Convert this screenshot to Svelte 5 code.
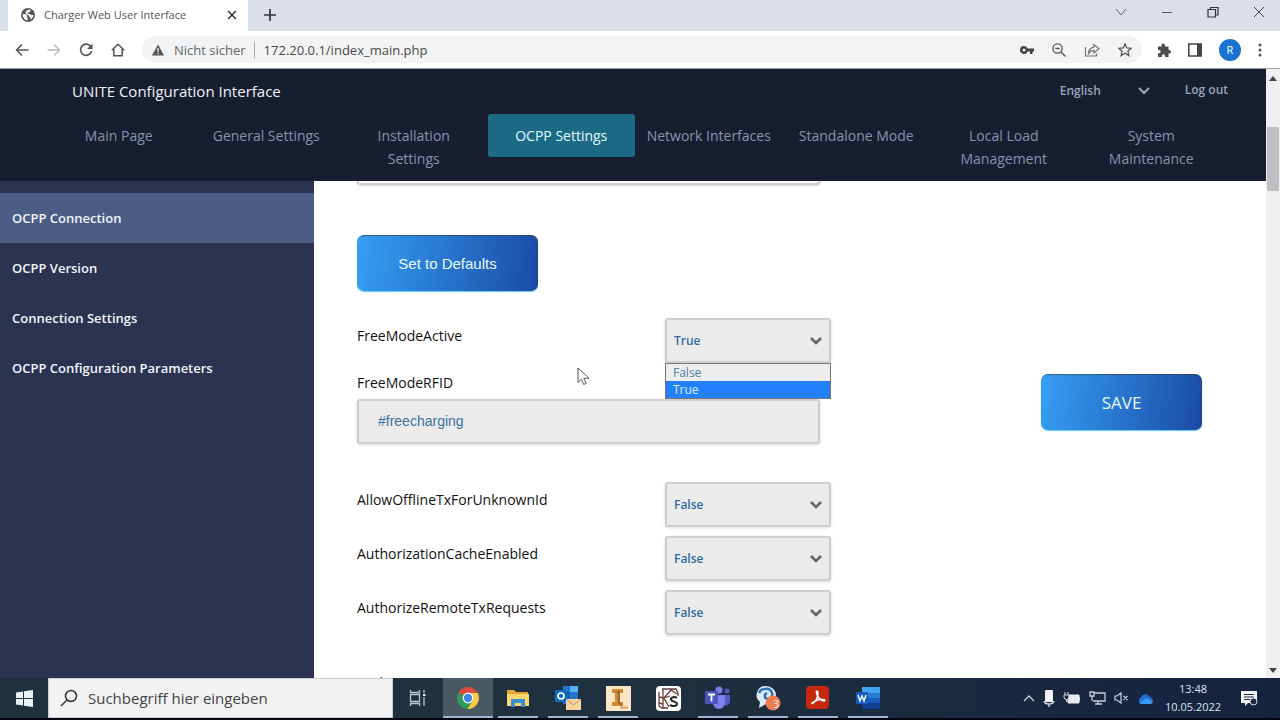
<script>
  // Page data
  const menu = [
    "Main Page",
    "General Settings",
    "Installation Settings",
    "OCPP Settings",
    "Network Interfaces",
    "Standalone Mode",
    "Local Load Management",
    "System Maintenance",
  ];
  const sections = [
    "OCPP Connection",
    "OCPP Version",
    "Connection Settings",
    "OCPP Configuration Parameters",
  ];

  // UI state
  let activeMenu = "OCPP Settings";
  let activeSection = "OCPP Connection";
  let language = "English";
  let url = "172.20.0.1/index_main.php";
  let chargePoint = "";
  let search = "";
  let freeMode = "True";
  let listOpen = true;
  let rfid = "#freecharging";
  let params = [
    { name: "AllowOfflineTxForUnknownId", value: "False" },
    { name: "AuthorizationCacheEnabled", value: "False" },
    { name: "AuthorizeRemoteTxRequests", value: "False" },
  ];

  function pick(option) {
    freeMode = option;
    listOpen = false;
  }

  function setDefaults() {
    freeMode = "False";
    rfid = "";
    params = params.map((p) => ({ ...p, value: "False" }));
  }
</script>

<div class="screen">
  <!-- Tab strip -->
  <div class="tabstrip">
    <div class="tab">
      <svg width="14" height="14" viewBox="0 0 14 14">
        <circle cx="7" cy="7" r="7" fill="#54585c" />
        <path d="M1.500 6l3 .3 1.800 1.400-.4 1.500 1 1.300-.6 2C3.500 12 1.600 9.500 1.500 6zM8 1.600l1.600.5-.5 1.700-2.100.7-.5 1.300 2.300.2 1.400 1.200 2.400-.1c0 1.500-1.200 3.500-2.900 4.300l-.3-1.900-1.400-1 .1-1.100-2.300-1L4.300 4.800l1.200-2z" fill="#fff" />
      </svg>
      <span class="tab-title">Charger Web User Interface</span>
      <button class="icon" aria-label="Close tab">
        <svg width="10" height="10" viewBox="0 0 10 10"><path d="M1 1l8 8M9 1L1 9" stroke="#333" stroke-width="1.500" /></svg>
      </button>
    </div>
    <button class="icon new-tab" aria-label="New tab">
      <svg width="12" height="12" viewBox="0 0 12 12"><path d="M6 0v12M0 6h12" stroke="#333" stroke-width="1.700" /></svg>
    </button>
    <div class="window-buttons">
      <button class="icon" aria-label="Search tabs">
        <svg width="12" height="12" viewBox="0 0 12 12"><path d="M1 3l5 6 5-6" fill="none" stroke="#666" /></svg>
      </button>
      <button class="icon" aria-label="Minimize">
        <svg width="12" height="12" viewBox="0 0 12 12"><path d="M1 6.500h10" stroke="#555" /></svg>
      </button>
      <button class="icon" aria-label="Restore">
        <svg width="12" height="12" viewBox="0 0 12 12"><path d="M1 3.500h7.500v7.500H1zM3.500 3.500v-2h7.500v7.500H8.500" fill="none" stroke="#333" stroke-width="1.200" /></svg>
      </button>
      <button class="icon" aria-label="Close">
        <svg width="12" height="12" viewBox="0 0 12 12"><path d="M1 1l10 10M11 1L1 11" stroke="#444" /></svg>
      </button>
    </div>
  </div>

  <!-- Toolbar -->
  <div class="toolbar">
    <div class="nav-buttons">
      <button class="icon" aria-label="Back">
        <svg width="14" height="14" viewBox="0 0 14 14"><path d="M13.500 7H1.500M7 1.500L1.500 7 7 12.500" fill="none" stroke="#555" stroke-width="1.500" /></svg>
      </button>
      <button class="icon" aria-label="Forward">
        <svg width="14" height="14" viewBox="0 0 14 14"><path d="M.5 7h12M7 1.500L12.500 7 7 12.500" fill="none" stroke="#bbb" stroke-width="1.500" /></svg>
      </button>
      <button class="icon" aria-label="Reload">
        <svg width="14" height="14" viewBox="0 0 14 14"><path d="M11.700 3.500A5.600 5.600 0 1 0 12.600 8" fill="none" stroke="#555" stroke-width="1.600" /><path d="M13.500.5v5.500H8z" fill="#555" /></svg>
      </button>
      <button class="icon" aria-label="Home">
        <svg width="14" height="14" viewBox="0 0 14 14"><path d="M.8 7.300L7 1.300l6.200 6M2.800 5.800v6.900h8.400V5.800" fill="none" stroke="#555" stroke-width="1.500" /></svg>
      </button>
    </div>
    <div class="address">
      <svg width="12" height="12" viewBox="0 0 12 12"><path d="M6 .5l6 11H0z" fill="#555" /><path d="M6 4v4M6 9v1.300" stroke="#fff" stroke-width="1.200" /></svg>
      <span class="insecure">Nicht sicher</span>
      <input aria-label="Address" bind:value={url} />
      <button class="icon" aria-label="Passwords">
        <svg width="14" height="10" viewBox="0 0 14 10"><path d="M4 1a4 4 0 1 0 3.700 5.500H10V9h2.500V6.500H14v-3H7.700A4 4 0 0 0 4 1zm0 2.500a1.500 1.500 0 1 1 0 3 1.500 1.500 0 0 1 0-3z" fill="#444" /></svg>
      </button>
      <button class="icon" aria-label="Zoom">
        <svg width="14" height="14" viewBox="0 0 14 14"><circle cx="5.500" cy="5.500" r="4.600" fill="none" stroke="#555" stroke-width="1.300" /><path d="M9 9l4.500 4.500M3.300 5.500h4.400" stroke="#555" stroke-width="1.400" /></svg>
      </button>
      <button class="icon" aria-label="Share">
        <svg width="16" height="14" viewBox="0 0 16 14"><path d="M1.500 4v9h11v-2.500" fill="none" stroke="#777" stroke-width="1.200" /><path d="M4.500 10.500C4.700 6.500 6.800 4.500 10 4.200V1.500l5 4.300-5 4.200V7.300c-2.500 0-4 .9-5.500 3.200z" fill="none" stroke="#777" stroke-width="1.200" /></svg>
      </button>
      <button class="icon" aria-label="Bookmark">
        <svg width="14" height="14" viewBox="0 0 14 14"><path d="M7 1l1.800 4 4.400.4-3.300 2.900 1 4.300L7 10.300l-3.900 2.300 1-4.300L.8 5.400 5.200 5z" fill="none" stroke="#555" stroke-width="1.300" /></svg>
      </button>
    </div>
    <div class="tools">
      <button class="icon" aria-label="Extensions">
        <svg width="14" height="14" viewBox="0 0 14 14"><path d="M1 3.500h3.500V2.300a1.700 1.700 0 0 1 3.400 0v1.200h3.600V7h.8a1.700 1.700 0 0 1 0 3.400h-.8V14H8v-1.200a1.600 1.600 0 0 0-3.200 0V14H1v-3.700h1a1.600 1.600 0 0 0 0-3.200H1z" fill="#4d4d4d" /></svg>
      </button>
      <button class="icon" aria-label="Side panel">
        <svg width="14" height="14" viewBox="0 0 14 14"><path d="M.8 1h12.400v12H.8z" fill="none" stroke="#444" stroke-width="1.500" /><path d="M9 1h4.500v12H9z" fill="#444" /></svg>
      </button>
      <button class="avatar">R</button>
      <button class="icon" aria-label="Menu">
        <svg width="4" height="14" viewBox="0 0 4 14"><g fill="#555"><circle cx="2" cy="2" r="1.500" /><circle cx="2" cy="7" r="1.500" /><circle cx="2" cy="12" r="1.500" /></g></svg>
      </button>
    </div>
  </div>

  <!-- Web page -->
  <div class="viewport">
    <div class="page">
      <header>
        <div class="top-row">
          <h1>UNITE Configuration Interface</h1>
          <div class="select language">
            <select aria-label="Language" bind:value={language}>
              <option>English</option>
              <option>Deutsch</option>
            </select>
            <svg class="chevron" width="12" height="8" viewBox="0 0 12 8"><path d="M1 1l5 5 5-5" fill="none" stroke="currentColor" stroke-width="2" /></svg>
          </div>
          <a class="logout" href="#logout">Log out</a>
        </div>
        <nav class="menu">
          {#each menu as item}
            <a href="#menu" class:active={item === activeMenu} on:click={() => (activeMenu = item)}>{item}</a>
          {/each}
        </nav>
      </header>

      <div class="body">
        <nav class="sidebar">
          {#each sections as s}
            <a href="#section" class:active={s === activeSection} on:click={() => (activeSection = s)}>{s}</a>
          {/each}
        </nav>

        <main>
          <div class="form">
            <input class="text-field cut-top" aria-label="Charge point" bind:value={chargePoint} />
            <button class="blue defaults" on:click={setDefaults}>Set to Defaults</button>

            <div class="row">
              <label for="free-mode">FreeModeActive</label>
              <div class="select">
                <select id="free-mode" bind:value={freeMode}>
                  <option>False</option>
                  <option>True</option>
                </select>
                <svg class="chevron" width="12" height="8" viewBox="0 0 12 8"><path d="M1 1l5 5 5-5" fill="none" stroke="currentColor" stroke-width="2.500" /></svg>
                {#if listOpen}
                  <div class="list">
                    {#each ["False", "True"] as option}
                      <button class:chosen={option === freeMode} on:click={() => pick(option)}>{option}</button>
                    {/each}
                  </div>
                {/if}
              </div>
            </div>

            <div class="stacked">
              <label for="rfid">FreeModeRFID</label>
              <input id="rfid" class="text-field" bind:value={rfid} />
            </div>

            <div class="params">
              {#each params as p, i}
                <div class="row">
                  <label for="param-{i}">{p.name}</label>
                  <div class="select">
                    <select id="param-{i}" bind:value={p.value}>
                      <option>False</option>
                      <option>True</option>
                    </select>
                    <svg class="chevron" width="12" height="8" viewBox="0 0 12 8"><path d="M1 1l5 5 5-5" fill="none" stroke="currentColor" stroke-width="2.500" /></svg>
                  </div>
                </div>
              {/each}
            </div>

            <div class="stacked last">
              <label for="auth-key">AuthorizationKey</label>
              <input id="auth-key" class="text-field" />
            </div>
          </div>
          <button class="blue save">SAVE</button>
        </main>
      </div>
    </div>

    <div class="scrollbar">
      <svg width="8" height="5" viewBox="0 0 8 5"><path d="M4 0l4 5H0z" fill="#444" /></svg>
      <div class="thumb"></div>
      <svg width="8" height="5" viewBox="0 0 8 5"><path d="M4 5l4-5H0z" fill="#444" /></svg>
    </div>
  </div>

  <!-- Taskbar -->
  <div class="taskbar">
    <button class="start" aria-label="Start">
      <svg width="17" height="17" viewBox="0 0 17 17"><path d="M0 2.500l7-1v6.600H0zM8 1.300L17 0v8.100H8zM0 9h7v6.500l-7-1zM8 9h9v8l-9-1.300z" fill="#e8f2f8" /></svg>
    </button>
    <div class="search">
      <svg width="18" height="18" viewBox="0 0 18 18"><circle cx="11" cy="7" r="5.500" fill="none" stroke="#333" stroke-width="1.500" /><path d="M7 11L1 17" stroke="#333" stroke-width="1.500" /></svg>
      <input aria-label="Search" placeholder="Suchbegriff hier eingeben" bind:value={search} />
    </div>
    <button class="task" aria-label="Task view">
      <svg width="18" height="18" viewBox="0 0 18 18"><path d="M1.500 1v2.500h9V1M1.500 17v-2.500h9V17M1.500 5.500h9v7h-9zM15 1v3M15 8v9" fill="none" stroke="#b6c6d0" stroke-width="1.300" /><path d="M14 5h2.500v2H14z" fill="#dce6ec" /></svg>
    </button>
    <button class="task running current" aria-label="Chrome">
      <svg width="24" height="24" viewBox="0 0 24 24">
        <path d="M12 12L2.500 6.500A11 11 0 0 1 21.500 6.500z" fill="#db4a3c" />
        <path d="M12 12L2.500 6.500A11 11 0 0 0 11.500 23L17 14z" fill="#2f9d58" />
        <path d="M12 7h9.800A11 11 0 0 1 11.500 23L17 14z" fill="#fbcb43" />
        <circle cx="12" cy="12" r="5.400" fill="#fff" /><circle cx="12" cy="12" r="4.200" fill="#4284e8" />
      </svg>
    </button>
    <button class="task running" aria-label="Explorer">
      <svg width="24" height="24" viewBox="0 0 24 24">
        <path d="M1 4h7l2 2h12v14H1z" fill="#e5a72f" /><path d="M1 8h22v12H1z" fill="#fcd76d" />
        <path d="M5 13h14v8h-4v-4H9v4H5z" fill="#3d8ed3" />
      </svg>
    </button>
    <button class="task running" aria-label="Outlook">
      <svg width="26" height="26" viewBox="0 0 26 26">
        <path d="M8 1h15v18H8z" fill="#2374cf" /><path d="M15 1h8v6h-8z" fill="#54b4ef" /><path d="M8 7h7v6H8z" fill="#165ba8" />
        <rect y="5" width="12" height="12" rx="1" fill="#0f6cc4" /><circle cx="6" cy="11" r="3" fill="none" stroke="#fff" stroke-width="1.700" />
        <path d="M11 14h15v11H11z" fill="#f5d5a4" /><path d="M11 14l7.500 6 7.500-6" fill="none" stroke="#cf8e4d" />
      </svg>
    </button>
    <button class="task running" aria-label="Inventor">
      <svg width="25" height="25" viewBox="0 0 25 25">
        <path d="M0 0h25v25H0z" fill="#fbe6c5" />
        <path d="M6 3h11v4h-3v9h3v4H6v-4h3V7H6z" fill="#d08a34" /><path d="M6 3l3 2h5v11l3 4-5-2V7z" fill="#a5682a" />
        <path d="M14 21.500h8" stroke="#d3a571" stroke-width="2" />
      </svg>
    </button>
    <button class="task" aria-label="KS">
      <svg width="25" height="25" viewBox="0 0 25 25">
        <rect width="25" height="25" rx="4" fill="#fff" />
        <path d="M6 3h14l2 4v3M3 6v14l3 2h6M7 3v19M3 11l5 1 7-8M15 4l6 4M8 12l5 9M8 12l6-2M3 17l4 1" fill="none" stroke="#673c34" stroke-width="1.300" />
        <path d="M21 12c-2-1.500-6-1-6 1.200 0 2.800 6 2 6 4.600s-5 3-7 1" fill="none" stroke="#222" stroke-width="2" />
      </svg>
    </button>
    <button class="task running" aria-label="Teams">
      <svg width="26" height="24" viewBox="0 0 26 24">
        <circle cx="14" cy="4" r="3.500" fill="#7b83eb" /><circle cx="22" cy="5" r="2.500" fill="#5059c9" />
        <path d="M18 9h7v7a4 4 0 0 1-7 2z" fill="#5059c9" /><path d="M8 9h12v8a6 6 0 0 1-12 0z" fill="#7b83eb" />
        <rect y="5" width="13" height="13" rx="1" fill="#4b53bc" /><path d="M3 8.500h7M6.500 8.500v7" stroke="#fff" stroke-width="1.800" />
      </svg>
    </button>
    <button class="task running" aria-label="Messages, 3 new">
      <svg width="26" height="26" viewBox="0 0 26 26">
        <path d="M11 1a10 9 0 0 1 0 18l-7 4 1-6A9 9 0 0 1 11 1z" fill="#dcebf7" />
        <path d="M4 8c2-5 11-6 13 0 1 3-1 6-4 6-4 0-4-5-1-6" fill="none" stroke="#2d72b8" stroke-width="2.500" />
        <circle cx="18" cy="18" r="7.500" fill="#ee7a50" />
      </svg>
      <span class="badge">3</span>
    </button>
    <button class="task running" aria-label="Acrobat">
      <svg width="24" height="24" viewBox="0 0 24 24">
        <rect width="23" height="23" rx="4" fill="#c5280f" />
        <path d="M11 5c-2 0 1 9 7 10 3-1-3-4-12 2-1 2 6-2 6-10 0-1 0-2-1-2z" fill="none" stroke="#fff" stroke-width="1.500" />
      </svg>
    </button>
    <button class="task running" aria-label="Word">
      <svg width="24" height="24" viewBox="0 0 24 24">
        <path d="M6 1h18v6H6z" fill="#41a5ee" /><path d="M6 7h18v5H6z" fill="#2b7cd3" /><path d="M6 12h18v5H6z" fill="#185abd" /><path d="M6 17h18v6H6z" fill="#103f91" />
        <path d="M0 6h12v12H0z" fill="#185abd" /><path d="M2 9l2 6 2-5 2 5 2-6" fill="none" stroke="#fff" stroke-width="1.400" />
      </svg>
    </button>

    <div class="tray">
      <svg width="12" height="8" viewBox="0 0 12 8"><path d="M1 7l5-5 5 5" fill="none" stroke="#c6d0dc" stroke-width="1.300" /></svg>
      <svg width="12" height="18" viewBox="0 0 12 18"><rect x="2" y="1" width="8" height="12" rx="1" fill="#f4f4f4" /><path d="M1 12c1 4 9 4 10 0M6 15v3" fill="none" stroke="#c6d0dc" stroke-width="1.500" /></svg>
      <svg width="18" height="12" viewBox="0 0 18 12"><path d="M6 3h10v8H5V8" fill="#e7edf2" stroke="#e7edf2" /><path d="M16.500 5v4M2 0v3M5 0v3M1 3h5v2a2.500 2.500 0 0 1-5 0zM3.500 7v3" fill="none" stroke="#d1dae2" /></svg>
      <svg width="17" height="14" viewBox="0 0 17 14"><path d="M5 2h11v8H4M9 10v3M6 13h7M1 1h4v4H1zM3 5v5" fill="none" stroke="#c6d0dc" stroke-width="1.300" /></svg>
      <svg width="15" height="12" viewBox="0 0 15 12"><path d="M1 4h2l4-3v10L3 8H1zM9.500 4l4 4M13.500 4l-4 4" fill="none" stroke="#c6d0dc" stroke-width="1.200" /></svg>
      <svg width="17" height="11" viewBox="0 0 17 11"><path d="M4 11a4 4 0 0 1 0-7 5 5 0 0 1 9 0 3.600 3.600 0 0 1 0 7z" fill="#1f6fd0" /><path d="M2 10l8-5 6 4-2 2H4z" fill="#3a9af2" /></svg>
      <div class="clock"><span>13:48</span><span>10.05.2022</span></div>
      <svg width="18" height="17" viewBox="0 0 18 17"><path d="M1 1h16v12H8l-3 3v-3H1z" fill="#f2f4f6" /><path d="M4 4.500h10M4 7h10M4 9.500h6" stroke="#1b2940" /><circle cx="13.500" cy="11.500" r="3.500" fill="#1b2940" stroke="#dde3e9" /></svg>
    </div>
  </div>

  <!-- Mouse pointer -->
  <svg class="pointer" width="13" height="19" viewBox="0 0 13 19"><path d="M1 1v14.500l3.300-3.200 2.400 5.200 2.500-1.100-2.400-5.100H12z" fill="#fff" stroke="#555" /></svg>
</div>

<style>
  :global(body) {
    margin: 0;
  }

  .screen {
    position: relative;
    display: flex;
    flex-direction: column;
    height: 100vh;
    overflow: hidden;
    background: #fff;
    font-family: "Open Sans", "Noto Sans", sans-serif;
    font-size: 14px;
  }

  button {
    border: none;
    padding: 0;
    background: none;
    font-family: inherit;
    cursor: pointer;
  }

  a {
    text-decoration: none;
  }

  svg {
    display: block;
    flex-shrink: 0;
  }

  input,
  select {
    box-sizing: border-box;
    font-family: inherit;
    outline: none;
  }

  .icon {
    display: flex;
    align-items: center;
    justify-content: center;
    flex-shrink: 0;
  }

  /* Browser chrome */
  .tabstrip {
    display: flex;
    align-items: stretch;
    height: 31px;
    padding-left: 8px;
    background: #dbdfea;
  }

  .tab {
    box-sizing: border-box;
    display: flex;
    align-items: center;
    gap: 9px;
    width: 240px;
    padding: 0 11px 2px 13px;
    background: #fff;
  }

  .tab-title {
    flex: 1;
    font-size: 11px;
    color: #555;
    white-space: nowrap;
  }

  .new-tab {
    margin-left: 16px;
    padding-bottom: 2px;
  }

  .window-buttons {
    display: flex;
    gap: 34px;
    margin-left: auto;
    padding: 0 15px 7px 0;
  }

  .toolbar {
    display: flex;
    align-items: center;
    height: 37px;
    padding: 0 18px 0 15px;
    border-bottom: 1px solid #9a9da3;
    background: #fff;
  }

  .nav-buttons {
    display: flex;
    gap: 18px;
  }

  .address {
    display: flex;
    align-items: center;
    flex: 1;
    gap: 18px;
    height: 27px;
    margin-left: 17px;
    padding: 0 10px;
    border-radius: 14px;
    background: #f1f3f4;
  }

  .insecure {
    margin-left: -8px;
    padding-right: 8px;
    border-right: 1px solid #aaa;
    font-size: 13px;
    line-height: 16px;
    color: #666;
  }

  .address input {
    flex: 1;
    margin-left: -9px;
    border: none;
    padding: 0;
    background: none;
    font-size: 13px;
    color: #4a4a4a;
  }

  .tools {
    display: flex;
    align-items: center;
    gap: 17px;
    margin-left: 15px;
  }

  .avatar {
    width: 22px;
    height: 22px;
    border-radius: 50%;
    background: #1a73d0;
    font-size: 11px;
    color: #fff;
  }

  /* Web page */
  .viewport {
    display: flex;
    flex: 1;
    min-height: 0;
  }

  .page {
    display: flex;
    flex-direction: column;
    flex: 1;
    min-width: 0;
  }

  header {
    box-sizing: border-box;
    height: 112px;
    background: #171e2f;
  }

  .top-row {
    display: flex;
    align-items: center;
    height: 43px;
    padding: 0 38px 0 72px;
  }

  h1 {
    flex: 1;
    margin: 0;
    font-size: 15px;
    font-weight: 400;
    color: #f0f3fa;
  }

  .logout {
    margin-left: 27px;
    padding-bottom: 2px;
    font-size: 12px;
    font-weight: 600;
    color: #9ba5bf;
  }

  .menu {
    display: grid;
    grid-template-columns: repeat(8, 1fr);
    align-items: start;
    padding: 2px 41px 0 45px;
  }

  .menu a {
    padding: 10px 20px;
    border-radius: 3px;
    line-height: 23px;
    text-align: center;
    color: #8791b0;
    font-size: 14px;
  }

  .menu a:not(:nth-child(3)):not(:nth-child(n + 7)) {
    padding: 10px 0;
  }

  .menu a.active {
    background: #1b6a86;
    color: #e4fbff;
  }

  .body {
    display: flex;
    flex: 1;
    min-height: 0;
  }

  .sidebar {
    width: 314px;
    flex-shrink: 0;
    padding-top: 12px;
    box-sizing: border-box;
    background: #2b3350;
  }

  .sidebar a {
    display: block;
    padding-left: 12px;
    line-height: 50px;
    font-size: 13px;
    font-weight: 600;
    color: #f2f5fb;
  }

  .sidebar a.active {
    background: #4a5d85;
  }

  main {
    display: flex;
    flex: 1;
    align-items: flex-start;
    justify-content: space-between;
    min-width: 0;
    padding: 0 64px 0 43px;
    overflow: hidden;
  }

  .form {
    flex: 1;
    max-width: 474px;
  }

  .text-field {
    display: block;
    width: 463px;
    max-width: 100%;
    height: 45px;
    padding: 0 19px 2px;
    border: 2px solid #cecece;
    border-radius: 3px;
    background: #ebebeb;
    box-shadow: 0 1px 3px rgba(0, 0, 0, 0.15);
    font-family: "Liberation Sans", sans-serif;
    font-size: 14px;
    color: #3b719f;
  }

  .cut-top {
    margin-top: -41px;
    background: #fff;
  }

  .blue {
    height: 56px;
    border-radius: 7px;
    background: linear-gradient(100deg, #35a0f4, #1a4aa5);
    box-shadow:
      inset -1px 1px 1px rgba(60, 60, 70, 0.6),
      0 1px 1px #5ccdf8;
    color: #e8faff;
  }

  .defaults {
    width: 181px;
    margin-top: 50px;
    margin-bottom: 27px;
    font-family: "Liberation Sans", sans-serif;
    font-size: 15px;
  }

  .save {
    width: 161px;
    flex-shrink: 0;
    margin-top: 193px;
    font-size: 17px;
  }

  .row {
    display: flex;
    align-items: flex-start;
    justify-content: space-between;
  }

  label {
    line-height: 22px;
    font-size: 14px;
    color: #111;
  }

  .row label {
    padding-top: 7px;
  }

  .select {
    position: relative;
    width: 166px;
    color: #5c6670;
  }

  .select select {
    display: block;
    width: 100%;
    height: 45px;
    padding: 0 7px 1px;
    border: 2px solid #cecece;
    border-radius: 3px;
    appearance: none;
    background: #ebebeb;
    box-shadow: 0 1px 3px rgba(0, 0, 0, 0.15);
    font-size: 12px;
    font-weight: 600;
    color: #2f6da3;
  }

  .chevron {
    position: absolute;
    right: 9px;
    top: 50%;
    margin-top: -4px;
    pointer-events: none;
  }

  .language {
    width: 98px;
    color: #9ba5bf;
  }

  .language select {
    padding: 0;
    border: none;
    background: none;
    box-shadow: none;
    font-size: 12px;
    color: inherit;
  }

  .language .chevron {
    right: 8px;
  }

  .list {
    position: absolute;
    z-index: 1;
    top: 45px;
    left: 0;
    right: 0;
    display: flex;
    flex-direction: column;
    border: 1px solid #777;
    background: #ededed;
  }

  .list button {
    padding-left: 7px;
    line-height: 17px;
    text-align: left;
    font-size: 12px;
    color: #4d80aa;
  }

  .list .chosen {
    background: #2380fb;
    color: #d4f0ff;
  }

  .stacked {
    display: flex;
    flex-direction: column;
    gap: 5px;
    margin-top: 9px;
  }

  .params {
    display: flex;
    flex-direction: column;
    gap: 9px;
    margin-top: 38px;
  }

  .last {
    margin-top: 37px;
  }

  .scrollbar {
    display: flex;
    flex-direction: column;
    align-items: center;
    width: 14px;
    padding: 7px 0 5px;
    box-sizing: border-box;
    background: #f0f0f1;
  }

  .thumb {
    width: 12px;
    height: 64px;
    margin: 46px 0 auto;
    background: #bfbfc1;
  }

  /* Taskbar */
  .taskbar {
    display: flex;
    align-items: stretch;
    height: 40px;
    border-bottom: 2px solid #04060f;
    background: linear-gradient(90deg, #20323d, #1f303f 50%, #15233f);
  }

  .start {
    display: flex;
    align-items: center;
    justify-content: center;
    width: 48px;
  }

  .search {
    box-sizing: border-box;
    display: flex;
    align-items: center;
    gap: 10px;
    flex: 0 1 345px;
    padding: 0 12px 0 11px;
    border: 1px solid #ccc;
    background: #f2f2f2;
  }

  .search input {
    flex: 1;
    min-width: 0;
    padding: 0;
    border: none;
    background: none;
    font-size: 15px;
  }

  .search input::placeholder {
    color: #444;
    opacity: 1;
  }

  .task {
    position: relative;
    display: flex;
    align-items: center;
    justify-content: center;
    width: 50px;
  }

  .running::after {
    content: "";
    position: absolute;
    bottom: 0;
    left: 5px;
    right: 5px;
    height: 2px;
    background: #9fb4d0;
  }

  .current {
    background: #4a5a64;
  }

  .current::after {
    left: 0;
    right: 0;
  }

  .badge {
    position: absolute;
    right: 14px;
    bottom: 7px;
    font-size: 10px;
    line-height: 14px;
    color: #fff;
  }

  .tray {
    display: flex;
    align-items: center;
    gap: 8px;
    margin-left: auto;
    padding-right: 22px;
  }

  .clock {
    display: flex;
    flex-direction: column;
    align-items: center;
    width: 62px;
    margin-right: 8px;
    font-size: 11px;
    line-height: 18px;
    color: #dde5ee;
  }

  .pointer {
    position: absolute;
    left: 577px;
    top: 367px;
  }
</style>
